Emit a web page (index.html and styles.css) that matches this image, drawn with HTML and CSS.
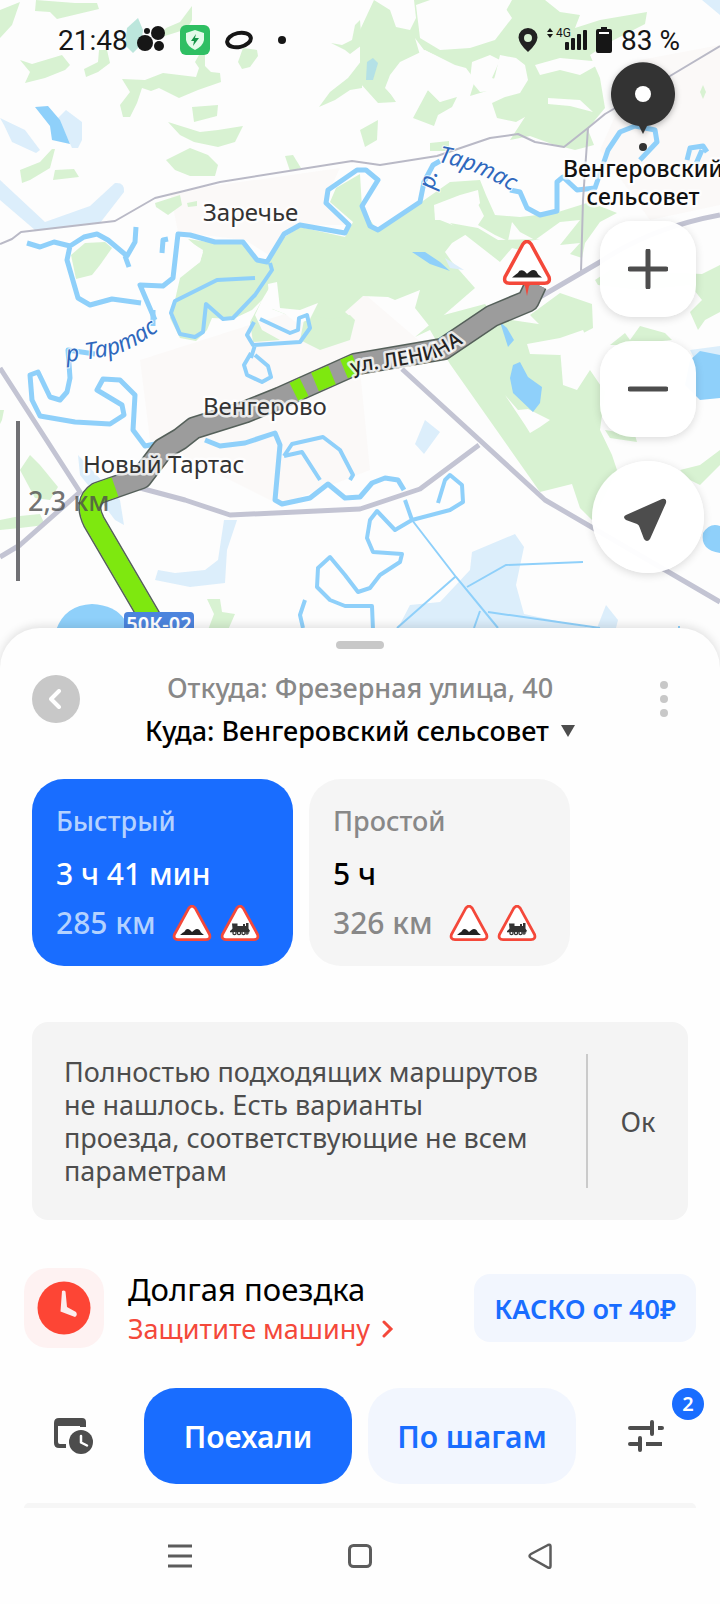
FILE: index.html
```html
<!DOCTYPE html>
<html lang="ru">
<head>
    <meta charset="UTF-8">
    <meta name="viewport" content="width=device-width, initial-scale=1.0">
    <title>Маршрут: Венгеровский сельсовет</title>
    <link rel="stylesheet" href="styles.css">
</head>
<body>
    <!-- Shared road sign icons -->
    <svg class="sprite" aria-hidden="true">
        <symbol id="sign-bump" viewBox="0 0 40 36">
            <path d="M16.8 3.2Q20 -1 23.2 3.2L37.6 29.6Q39 34.5 34 34.6H6Q1 34.5 2.4 29.6Z" fill="#fff" stroke="#f4483a" stroke-width="2.8"/>
            <path d="M8 30L11 27.5Q12.5 27 14 24.5Q16 23.5 18 25L20 27L22.5 25Q25 23 27.5 25L29 27.5L32 30Z" fill="#222"/>
        </symbol>
        <symbol id="sign-train" viewBox="0 0 40 36">
            <path d="M16.8 3.2Q20 -1 23.2 3.2L37.6 29.6Q39 34.5 34 34.6H6Q1 34.5 2.4 29.6Z" fill="#fff" stroke="#f4483a" stroke-width="2.8"/>
            <path d="M12 18.5H17.5V21H23V19H25V21H26V18H28.5V23.5L30 26H10.5L12.5 23.5Z" fill="#333"/>
            <path d="M10 26.5H29.5" stroke="#333" stroke-width="1.6"/>
            <g fill="#fff" stroke="#333" stroke-width="1.3"><circle cx="14.5" cy="28" r="1.6"/><circle cx="19" cy="28" r="1.6"/><circle cx="23.5" cy="28" r="1.6"/><circle cx="27" cy="28" r="1.1"/></g>
        </symbol>
    </svg>

    <div class="map">
        <svg class="map-canvas" viewBox="0 0 720 668" preserveAspectRatio="xMidYMin slice">
            <defs>
                <path id="river-left" d="M67 362Q85 360 108 356Q140 350 180 312"/>
                <path id="river-right" d="M438 162Q475 168 525 199"/>
                <path id="river-right-p" d="M434 190L440 160"/>
                <path id="lenina" d="M353 374L362 371Q420 364 442 356L490 327"/>
            </defs>
            <!-- Settlements -->
            <g class="town">
                <path d="M170 192L340 168L325 200L345 225L300 225L280 262L245 240L178 232Z"/>
                <path d="M640 60L720 45V205L650 220L600 150Z"/>
                <path d="M140 360L360 290L430 350L360 370L370 470L280 505L150 440Z"/>
            </g>
            <!-- Forest -->
            <g class="forest">
                <path d="M0 10L20 2L12 25L0 38Z"/>
                <path d="M36 0L75 3L97 3L99 9L78 14L57 19L50 12L35 11Z"/>
                <path d="M192 6V20L187 29L168 35L158 38L166 28L180 22Z"/>
                <path d="M20 60L32 64L62 55L70 65L65 70L45 78L25 83L30 72Z"/>
                <path d="M99 50H107L110 63L98 72L86 77L84 69L98 62Z"/>
                <path d="M122 79L145 80L163 73L196 77L199 68L195 62L199 55H205V66L211 72L220 73L221 82L198 90L179 98L159 88L151 91L142 88L137 103L130 117H123L120 105L130 92Z"/>
                <path d="M243 48L257 50L258 56L250 67L242 69L238 62Z"/>
                <path d="M192 107L218 105L217 116L194 122Z"/>
                <path d="M168 122L200 132L218 130L243 126L235 142L218 147L194 142L180 135Z"/>
                <path d="M166 160L190 148L208 155L218 165L215 176H190L175 170Z"/>
                <path d="M20 170L40 162L52 149H55L50 168L30 180L22 183Z"/>
                <path d="M55 170L74 169L79 177L53 180Z"/>
                <path d="M285 156L293 155L301 168L290 171Z"/>
                <path d="M360 20L355 25L352 40L342 45L331 43L345 50L350 54L362 45Z"/>
                <path d="M362 60L348 78L330 92L319 107L335 100L350 90L362 88Z"/>
                <path d="M155 203L180 195L182 205L168 215L156 207Z"/>
                <path d="M187 203L197 201V206L188 207Z"/>
                <path d="M71 255L85 243L105 242L112 248L100 265L92 275L76 279Z"/>
                <!-- north wood -->
                <path d="M374 0L390 10L396 27L410 30L416 18L414 0H490L502 18L512 0H545L560 12L580 15L575 28L600 20L647 12L645 24L610 42L590 55L600 78L605 108L595 120L588 130L594 145L575 150L552 144L530 136L510 140L525 117L516 122L497 118L492 103L505 97L520 93L528 80L525 65L516 58L500 55L495 76L490 90L470 96L475 80L466 68L455 65L435 55L424 50L415 38L420 55L405 78L388 90L396 102L378 103L360 83V30Z"/>
                <path d="M428 90L440 102L457 97L452 107L438 115L434 126L413 118Z"/>
                <path d="M360 130L378 120L377 140L365 147Z"/>
                <path d="M430 143L449 141V151H430Z"/>
                <!-- central wood -->
                <path d="M188 239L215 243L242 243L256 262L268 262L283 238L300 227L345 237L353 222L330 202L336 188L360 174L362 208L377 230L420 203L450 182L480 180L486 195L495 215L520 217L555 213L590 202L617 213L600 222L585 243L582 258L570 254L580 243L560 245L580 220L560 222L535 240L520 232L512 222L508 241L495 235L478 225L484 216L478 204L445 205L435 215L440 220L470 232L452 243L445 252L452 262L475 288L430 327L415 308L420 290L395 300L388 297L363 296L345 312L352 318L350 335L335 344L315 325L300 320L272 309L271 285L262 300L255 315L262 330L280 340L253 342L250 322L262 300L252 310L233 319L212 318L207 330L196 341L180 338L170 318L175 300L180 278L200 262L203 252Z"/>
                <path d="M304 320L295 312L330 319L350 315L355 320L350 340L320 350L300 340Z"/>
                <path d="M450 223L478 228L498 240L540 239L525 242L528 252L512 248L500 262Z"/>
                <!-- east woods -->
                <path d="M415 337L440 316L485 304L497 318L545 325L530 345L560 348L563 385L577 390L590 370L605 392L600 430L612 455L617 470L600 505L592 520L580 508L572 484L540 492L450 364L430 330Z"/>
                <path d="M530 315L560 293L592 304L593 328L570 340L530 348L523 344L540 325Z"/>
                <path d="M595 280L610 270L702 274L720 265V312L705 320L698 330L690 312L702 300L690 285L640 290L598 285Z"/>
                <path d="M610 345L625 333L630 340L640 326L665 333L672 340L625 345Z"/>
                <path d="M605 430L635 435L637 442L610 438Z"/>
                <path d="M680 470L700 465L720 450V465L700 485L690 480Z"/>
                <path d="M703 85L706 92L703 99L700 92Z"/>
                <path d="M30 455L40 465L58 487L50 500L35 498L20 470Z"/>
                <path d="M0 520L20 516L40 514L45 525L20 528L0 530Z"/>
                <path d="M0 410H4L2 420L0 424Z"/>
                <path d="M207 599H220L222 612L235 614L228 630H208L214 614Z"/>
            </g>
            <!-- Glades -->
            <g class="glade">
                <path d="M187 240L203 250L200 262L175 280L180 250Z"/>
                <path d="M390 75L400 62L425 50L440 58L455 66L464 80L455 94L440 102L428 90L415 100L398 102L385 88Z"/>
                <path d="M472 62L490 55L500 60L492 78L505 82L500 90L480 92L470 80Z"/>
                <path d="M416 5L430 0H500L512 18L495 40L470 48L440 50L420 38Z"/>
                <path d="M535 65L560 58L603 62L580 75L560 70L540 75Z"/>
                <path d="M548 98L580 100L593 112L570 106L548 104Z"/>
                <path d="M434 205L460 195L478 190L480 203L468 220L435 220Z"/>
                <path d="M268 284L277 282L280 308L300 310L318 303L310 319L298 324L285 314L270 308Z"/>
                <path d="M527 344L560 338L583 330L590 345L560 355L530 354Z"/>
                <path d="M505 395L518 410L528 409L550 420L540 427L530 433L525 425Z"/>
            </g>
            <!-- Marsh and shallow water -->
            <g class="marsh">
                <path d="M0 118L25 130L40 150L36 153L12 142L4 125Z"/>
                <path d="M58 118L66 110L82 122V140L78 148H72Z"/>
                <path d="M0 180L45 222L90 206L115 183Q125 182 124 192L100 223L35 230L0 200Z"/>
                <path d="M78 455L120 500L124 525L115 520L100 500L80 475Z"/>
                <path d="M224 520L237 520L227 550L225 583L190 587L155 580L158 570L175 573L205 570L218 560Z"/>
                <path d="M425 420L440 432L424 454L415 444Z"/>
                <path d="M398 628L410 605L440 602L470 570L472 552L515 534L524 547L516 585L524 614L590 628Z"/>
                <path d="M597 628L606 605L618 620L616 628Z"/>
                <path d="M690 350L720 346V360H695Z"/>
                <path d="M445 258L464 270L450 268Z"/>
                <path d="M702 0H720V15Z"/>
            </g>
            <path class="mint" d="M127 28L138 18L143 30L141 45L133 53L125 45Z"/>
            <!-- Lakes -->
            <g class="lake">
                <path d="M35 107L48 106L60 120L70 144L52 140L50 126Z"/>
                <path d="M412 252L425 252L440 262L450 271L430 264Z"/>
                <path d="M500 322L507 328L514 340L508 347Z"/>
                <path d="M513 365L520 362L528 377L542 387L540 403L533 412L513 393L510 378Z"/>
                <path d="M690 360L700 351L720 355V398L700 400L685 385Z"/>
                <path d="M703 533Q710 522 720 526V553Q700 550 703 533Z"/>
                <path d="M56 630Q65 605 92 604Q115 605 125 620V635Z"/>
                <path d="M367 62L373 58L378 63L373 80L366 80Z" opacity=".5"/>
            </g>
            <!-- Rivers -->
            <g class="river">
                <path d="M27 243L40 247L54 242L70 246L84 237L97 234L108 240L127 256L135 242L136 227M125 256L129 267M70 246L67 260L78 298L90 305L112 299L141 303"/>
                <path d="M162 253L163 240L168 239"/>
                <path d="M155 320L140 285L163 286L173 278L178 234L190 235L215 242H243L257 260L267 262L284 234L300 225L345 233L349 225L326 203L328 190L357 170L366 170L378 180L362 206L370 226L378 230L420 202L424 182L433 165L440 161M510 190L520 192L527 208L540 215L557 211V182L563 177L577 190L595 188L608 150L620 132L635 126L655 130L657 142L640 160"/>
                <path d="M687 160L690 148L703 146L707 152M702 150L695 166"/>
                <path d="M153 310V326M95 354L68 350L70 378L67 392L60 400L50 397L38 372L30 375L32 400L40 416L75 422L110 424L124 415L122 405L97 390L103 379L120 380L135 395L133 430L145 446L175 440L190 420M205 440L220 446L245 443L275 433L280 445L275 500L282 504L310 498L328 484L345 498L360 497L372 483L385 478L398 480L404 490"/>
            </g>
            <g class="river river-thin">
                <path d="M270 263L272 270L255 295L233 318L223 319L206 304L203 332L195 337L180 334L171 313L175 301L217 280L255 278"/>
                <path d="M254 322L247 335L253 345L300 342L310 328L307 315L299 318L298 330L290 333L260 319M255 345L251 358M251 353L244 365L247 375L262 382L271 377L268 366L255 355"/>
                <path d="M284 456L292 444L323 437L340 450L353 475L350 480M284 456L302 452L320 480"/>
                <path d="M405 500L412 520L395 530L377 511L370 520L367 538L373 552L402 554L400 562L380 575L370 588L358 592L345 575L330 557L318 568L317 587L330 600L345 606H372L373 630"/>
                <path d="M412 520L450 510L463 502L462 485L450 475L445 480L438 503"/>
                <path d="M305 600L300 615L303 628"/>
            </g>
            <g class="canal">
                <path d="M412 520L456 577L498 628M455 577L397 628M467 587L506 565L583 562M480 611L474 628M488 612L600 628M679 626V640"/>
            </g>
            <!-- Roads -->
            <g class="road road-thin">
                <path d="M0 244L12 239L21 232L115 221L155 198L180 192L220 182L352 161L380 165L437 156L490 138L518 134L535 142L564 147L588 128L605 114L670 76L720 46"/>
                <path d="M588 128L583 200L581 272"/>
            </g>
            <g class="road">
                <path d="M0 368L80 492L20 545L0 557M140 488L185 500L230 515L360 509L420 489L479 445"/>
                <path d="M402 369L545 500L720 602"/>
                <path d="M540 297L600 262Q650 228 720 215"/>
            </g>
            <!-- Route -->
            <path class="route-edge" d="M156 628L94 522Q84 502 98 493Q115 487 141 478L163 449L180 439L194 428L245 412L280 398L356 364L443 349L492 316L528 301L536 284"/>
            <path class="route-jam" d="M156 628L94 522Q84 502 98 493Q115 487 141 478L163 449L180 439L194 428L245 412L280 398L356 364L443 349L492 316L528 301L536 284"/>
            <path class="route-free" d="M156 628L94 522Q84 502 98 493L115 487M294 392L304 387M315 382L332 375M344 369L356 364"/>
            <!-- Scale ruler -->
            <path class="ruler" d="M18 421V581"/>
            <text class="ruler-text" x="28" y="511">2,3 км</text>
            <!-- Place names -->
            <g class="place">
                <text x="203" y="221">Заречье</text>
                <text x="203" y="415">Венгерово</text>
                <text x="83" y="473">Новый Тартас</text>
            </g>
            <g class="water-name">
                <text><textPath href="#river-left">р Тартас</textPath></text>
                <text><textPath href="#river-right">Тартас</textPath></text>
                <text><textPath href="#river-right-p">р.</textPath></text>
            </g>
            <text class="street"><textPath href="#lenina">ул. ЛЕНИНА</textPath></text>
            <rect x="124" y="612" width="70" height="40" rx="4" fill="#4c84dd"/>
            <text class="road-number" x="159" y="631">50К-02</text>
            <!-- Route warning -->
            <path d="M520 282H534L529 286L527 296L525 286Z" fill="#f4483a"/>
            <svg x="502" y="240" width="50" height="45"><use href="#sign-bump"/></svg>
            <!-- Destination pin -->
            <path class="pin" d="M643 134L639 126A32 32 0 1 1 647 126Z"/>
            <circle cx="643" cy="94" r="8" fill="#fff"/>
            <circle cx="643" cy="147" r="4" fill="#333"/>
            <g class="destination">
                <text x="643" y="177">Венгеровский</text>
                <text x="643" y="205">сельсовет</text>
            </g>
        </svg>

        <div class="status-bar">
            <div class="status-left">
                <span>21:48</span>
                <svg width="28" height="28" viewBox="0 0 28 28" fill="#161616"><circle cx="8" cy="17" r="8"/><circle cx="21" cy="7" r="7"/><circle cx="22" cy="20" r="5"/><circle cx="10" cy="5" r="3"/></svg>
                <svg class="shield" width="30" height="30" viewBox="0 0 30 30"><rect width="30" height="30" rx="6" fill="#2fbf63"/><path d="M15 5L24 8V15Q23 21 15 25Q7 21 6 15V8Z" fill="#e4fbea"/><path d="M16 9L11 16H14L13 21L19 13H15Z" fill="#159447"/></svg>
                <svg class="ring" width="28" height="20" viewBox="0 0 28 20"><ellipse cx="14" cy="10" rx="12" ry="7" transform="rotate(-12 14 10)" fill="none" stroke="#161616" stroke-width="4"/></svg>
                <svg class="dot" width="8" height="8" viewBox="0 0 8 8"><circle cx="4" cy="4" r="4" fill="#161616"/></svg>
            </div>
            <div class="status-right">
                <svg class="location" width="20" height="24" viewBox="0 0 20 24"><path d="M10 0A9.500 9.500 0 0 1 19.500 9.500Q19 16 10 24Q1 16 .5 9.500A9.500 9.500 0 0 1 10 0ZM10 6A4 4 0 1 0 10 14A4 4 0 1 0 10 6Z" fill="#222" fill-rule="evenodd"/></svg>
                <svg width="40" height="24" viewBox="0 0 40 24" fill="#161616"><path d="M0 4L3 0L6 4ZM0 6L3 10L6 6Z"/><text class="network" x="9" y="9">4G</text><rect x="18" y="14" width="4" height="8" rx="1"/><rect x="24" y="10" width="4" height="12" rx="1"/><rect x="30" y="6" width="4" height="16" rx="1"/><rect x="36" y="2" width="4" height="20" rx="1"/></svg>
                <svg class="battery" width="16" height="26" viewBox="0 0 16 26"><path d="M5 0H11V2H14Q16 2 16 4V24Q16 26 14 26H2Q0 26 0 24V4Q0 2 2 2H5Z" fill="#161616"/><path d="M3 6H13" stroke="#fff" stroke-width="2"/></svg>
                <span>83 %</span>
            </div>
        </div>

        <div class="map-controls">
            <button class="zoom-button" aria-label="Приблизить">
                <svg width="40" height="40" viewBox="0 0 40 40"><path d="M20 2V38M2 20H38" stroke="#4d4d4d" stroke-width="5" stroke-linecap="round"/></svg>
            </button>
            <button class="zoom-button" aria-label="Отдалить">
                <svg width="40" height="40" viewBox="0 0 40 40"><path d="M2 20H38" stroke="#4d4d4d" stroke-width="5" stroke-linecap="round"/></svg>
            </button>
            <button class="locate-button" aria-label="Моё местоположение">
                <svg width="48" height="48" viewBox="0 0 48 48"><path d="M38 6L2 22Q-2 24 2 27L13 31Q15 32 15.500 34L20 46Q23 50 26 46L42 10Q43 5 38 6Z" fill="#4d4d4d"/></svg>
            </button>
        </div>
    </div>

    <main class="sheet">
        <div class="handle"></div>

        <header class="route-header">
            <button class="back-button" aria-label="Назад">
                <svg width="14" height="20" viewBox="0 0 14 20"><path d="M10 2L2 10L10 18" fill="none" stroke="#fff" stroke-width="4" stroke-linecap="round" stroke-linejoin="round"/></svg>
            </button>
            <div class="points">
                <button class="point from">Откуда: Фрезерная улица, 40</button>
                <button class="point to">Куда: Венгеровский сельсовет
                    <svg width="14" height="12" viewBox="0 0 14 12"><path d="M0 0H14L7 12Z" fill="#4d4d4d"/></svg>
                </button>
            </div>
            <button class="more-button" aria-label="Ещё">
                <svg width="8" height="36" viewBox="0 0 8 36" fill="#c8c8c8"><circle cx="4" cy="4" r="4"/><circle cx="4" cy="18" r="4"/><circle cx="4" cy="32" r="4"/></svg>
            </button>
        </header>

        <div class="variants">
            <button class="variant active">
                <span class="variant-name">Быстрый</span>
                <span class="variant-time">3 ч 41 мин</span>
                <span class="variant-info">285 км
                    <svg class="sign" width="40" height="36"><use href="#sign-bump"/></svg>
                    <svg class="sign" width="40" height="36"><use href="#sign-train"/></svg>
                </span>
            </button>
            <button class="variant">
                <span class="variant-name">Простой</span>
                <span class="variant-time">5 ч</span>
                <span class="variant-info">326 км
                    <svg class="sign" width="40" height="36"><use href="#sign-bump"/></svg>
                    <svg class="sign" width="40" height="36"><use href="#sign-train"/></svg>
                </span>
            </button>
        </div>

        <div class="notice">
            <p>Полностью подходящих маршрутов не нашлось. Есть варианты проезда, соответствующие не всем параметрам</p>
            <button class="ok-button">Ок</button>
        </div>

        <div class="promo">
            <div class="promo-icon">
                <svg width="54" height="54" viewBox="0 0 54 54"><circle cx="27" cy="27" r="26.500" fill="#fd4535"/><path d="M25 10Q27 9 28.500 10.500L30 26L39 31Q41 34 38 36L23.500 30.500Z" fill="#fceeee"/></svg>
            </div>
            <div class="promo-text">
                <div class="promo-title">Долгая поездка</div>
                <a class="promo-link" href="#">Защитите машину
                    <svg width="12" height="18" viewBox="0 0 12 18"><path d="M2 2L9 9L2 16" fill="none" stroke="#f4483a" stroke-width="3" stroke-linecap="round"/></svg>
                </a>
            </div>
            <button class="promo-button">КАСКО от 40₽</button>
        </div>

        <div class="actions">
            <button class="icon-button" aria-label="Время выезда">
                <svg width="40" height="36" viewBox="0 0 40 36"><path d="M5 0H28Q32 0 32 4V9H26V8H4V24Q4 26 6 26H12V30H5Q0 30 0 25V5Q0 0 5 0Z" fill="#4d4d4d"/><circle cx="27" cy="24" r="14" fill="#fff"/><circle cx="27" cy="24" r="12" fill="#4d4d4d"/><path d="M27 18V24.500L33 27.500" fill="none" stroke="#fff" stroke-width="2.500" stroke-linecap="round" stroke-linejoin="round"/></svg>
            </button>
            <button class="action primary">Поехали</button>
            <button class="action">По шагам</button>
            <button class="icon-button" aria-label="Параметры">
                <svg width="36" height="32" viewBox="0 0 36 32"><path d="M2 8H24M24 2V14M32 8H34M2 24H12M12 18V30" fill="none" stroke="#4d4d4d" stroke-width="4" stroke-linecap="round"/><path d="M30 8H33M18 24H34" stroke="#4d4d4d" stroke-width="4"/></svg>
                <span class="badge">2</span>
            </button>
        </div>
        <div class="next-card"></div>
    </main>

    <nav class="system-nav">
        <button aria-label="Недавние">
            <svg width="24" height="24" viewBox="0 0 24 24"><path d="M0 2H24M0 12H24M0 22H24" stroke="#5c5c5c" stroke-width="3"/></svg>
        </button>
        <button aria-label="Домой">
            <svg width="24" height="24" viewBox="0 0 24 24"><rect x="1.500" y="1.500" width="21" height="21" rx="4" fill="none" stroke="#5c5c5c" stroke-width="3"/></svg>
        </button>
        <button aria-label="Назад">
            <svg width="24" height="26" viewBox="0 0 24 26"><path d="M20 2L3 11Q0 13 3 15L20 24.500Q22.500 25.500 22.500 23V3.500Q22.500 1 20 2Z" fill="none" stroke="#5c5c5c" stroke-width="2.500"/></svg>
        </button>
    </nav>
</body>
</html>
```
FILE: styles.css
```css
* {
    box-sizing: border-box;
}

body {
    margin: 0;
    background: #fefefe;
    color: #000;
    font-family: 'Noto Sans', 'Open Sans', sans-serif;
    font-size: 27px;
}

button {
    margin: 0;
    padding: 0;
    border: none;
    background: none;
    color: inherit;
    font: inherit;
    cursor: pointer;
}

svg {
    display: block;
    flex-shrink: 0;
}

.sprite {
    position: absolute;
    width: 0;
    height: 0;
}

/* Map */
.map {
    position: relative;
    overflow: hidden;
    background: #fdfdfd;
    padding-bottom: 95px;
}

/* Drawing sits under the status bar and the buttons */
.map-canvas {
    position: absolute;
    top: 0;
    left: 0;
    width: 100%;
    height: 100%;
}

.town { fill: #fbf9f8; }
.forest { fill: #d8f2d2; }
.glade { fill: #fdfdfd; }
.marsh { fill: #dceefb; }
.mint { fill: #bce6dc; }
.lake { fill: #8fd0fa; }

.river {
    fill: none;
    stroke: #8fd0fa;
    stroke-width: 5px;
    stroke-linejoin: round;
}

.river-thin {
    stroke-width: 4px;
}

.canal {
    fill: none;
    stroke: #8fd0fa;
    stroke-width: 2px;
}

.road {
    fill: none;
    stroke: #c3c4d3;
    stroke-width: 5px;
    stroke-linejoin: round;
}

.road-thin {
    stroke: #b9b9c6;
    stroke-width: 2px;
}

.route-edge,
.route-jam,
.route-free {
    fill: none;
    stroke-linejoin: round;
}

.route-edge {
    stroke: #55605a;
    stroke-width: 23px;
}

.route-jam {
    stroke: #9c9c9c;
    stroke-width: 20px;
}

.route-free {
    stroke: #7ee80f;
    stroke-width: 20px;
}

.ruler {
    stroke: #707074;
    stroke-width: 4px;
}

.ruler-text {
    font-size: 27px;
    font-weight: 500;
    fill: #4d4d4d;
    fill-opacity: 0.8;
}

.place,
.destination,
.street,
.water-name {
    paint-order: stroke;
    stroke: rgba(255, 255, 255, 0.8);
    stroke-width: 5px;
    stroke-linejoin: round;
}

.place {
    font-size: 24px;
    fill: #333;
}

.destination {
    font-size: 23px;
    font-weight: 500;
    fill: #111;
    text-anchor: middle;
}

.street {
    font-size: 20px;
    font-weight: 500;
    fill: #222;
}

.water-name {
    font-size: 23px;
    font-style: italic;
    fill: #2f68bd;
    stroke-width: 2px;
}

.road-number {
    font-size: 20px;
    font-weight: 600;
    fill: #fff;
    text-anchor: middle;
}

.pin {
    fill: #333;
    filter: drop-shadow(0 2px 3px rgba(0, 0, 0, 0.3));
}

/* Phone status bar */
.status-bar {
    position: relative;
    display: flex;
    justify-content: space-between;
    align-items: center;
    height: 80px;
    padding: 0 40px 0 58px;
    font-family: Roboto, sans-serif;
    font-size: 28px;
    color: #161616;
}

.status-left,
.status-right {
    display: flex;
    align-items: center;
}

.status-left {
    gap: 9px;
}

.status-right {
    gap: 9px;
}

.shield {
    margin-left: 6px;
}

.ring {
    margin-left: 6px;
}

.dot {
    margin-left: 16px;
}

.network {
    font-size: 12px;
}

/* Zoom and location buttons */
.map-controls {
    position: relative;
    display: flex;
    flex-direction: column;
    align-items: flex-end;
    gap: 24px;
    padding: 141px 24px 0;
}

.zoom-button,
.locate-button {
    display: flex;
    justify-content: center;
    align-items: center;
    width: 96px;
    height: 96px;
    border-radius: 32px;
    background: rgba(255, 255, 255, 0.96);
    box-shadow: 0 2px 8px rgba(0, 0, 0, 0.14);
}

.locate-button {
    width: 112px;
    height: 112px;
    margin-right: -8px;
    border-radius: 50%;
}

/* Bottom sheet */
.sheet {
    position: relative;
    margin-top: -40px;
    padding-top: 13px;
    border-radius: 40px 40px 0 0;
    background: #fefefe;
    box-shadow: 0 -2px 10px rgba(0, 0, 0, 0.12);
}

.handle {
    width: 48px;
    height: 8px;
    margin: 0 auto;
    border-radius: 4px;
    background: #c8c8c8;
}

.route-header {
    display: flex;
    justify-content: space-between;
    align-items: center;
    padding: 17px 32px 0;
}

.back-button {
    display: flex;
    justify-content: center;
    align-items: center;
    width: 48px;
    height: 48px;
    margin-bottom: 20px;
    border-radius: 50%;
    background: #c8c8c8;
}

.more-button {
    display: flex;
    justify-content: center;
    width: 48px;
    margin-bottom: 20px;
}

.points {
    display: flex;
    flex-direction: column;
    align-items: center;
}

.point {
    display: flex;
    align-items: center;
    gap: 12px;
    font-weight: 500;
    line-height: 43px;
}

.from {
    color: #888;
}

/* Route variants */
.variants {
    display: flex;
    gap: 16px;
    padding: 27px 32px 0;
}

.variant {
    display: flex;
    flex-direction: column;
    align-items: flex-start;
    width: 261px;
    padding: 24px 24px 21px;
    border-radius: 32px;
    background: #f5f5f5;
    font-weight: 500;
}

.variant-name {
    line-height: 36px;
    color: #888;
}

.variant-time {
    margin-top: 8px;
    font-size: 30px;
    line-height: 54px;
}

.variant-info {
    display: flex;
    align-items: center;
    gap: 8px;
    font-size: 30px;
    line-height: 44px;
    color: #888;
}

.sign:first-of-type {
    margin-left: 8px;
}

.active {
    background: #196dff;
    color: #fff;
}

.active .variant-name,
.active .variant-info {
    color: #b4d2ff;
}

/* Notice */
.notice {
    display: flex;
    margin: 56px 32px 0;
    padding: 32px 0;
    border-radius: 16px;
    background: #f4f4f4;
    color: #4d4d4d;
}

.notice p {
    flex: 1;
    margin: 0;
    padding: 1px 44px 1px 32px;
    line-height: 33px;
}

.ok-button {
    width: 102px;
    border-left: 2px solid #cacaca;
}

/* Insurance promo */
.promo {
    display: flex;
    align-items: center;
    padding: 48px 24px 0;
}

.promo-icon {
    display: flex;
    justify-content: center;
    align-items: center;
    width: 80px;
    height: 80px;
    border-radius: 24px;
    background: #fef2f2;
}

.promo-text {
    flex: 1;
    padding-left: 24px;
}

.promo-title {
    font-size: 31px;
    line-height: 42px;
}

.promo-link {
    display: flex;
    align-items: center;
    gap: 12px;
    line-height: 38px;
    color: #f4483a;
    text-decoration: none;
}

.promo-button {
    height: 68px;
    padding: 0 20px;
    border-radius: 16px;
    background: #f2f6fe;
    color: #196dff;
    font-weight: 600;
}

/* Bottom actions */
.actions {
    display: flex;
    gap: 16px;
    padding: 40px 20px 0;
}

.icon-button {
    position: relative;
    display: flex;
    justify-content: center;
    align-items: center;
    width: 108px;
}

.action {
    flex: 1;
    height: 96px;
    border-radius: 32px;
    background: #f2f6fe;
    color: #196dff;
    font-size: 30px;
    font-weight: 600;
}

.primary {
    background: #196dff;
    color: #fff;
}

.badge {
    position: absolute;
    top: 0;
    right: -4px;
    width: 32px;
    height: 32px;
    border-radius: 50%;
    background: #196dff;
    color: #fff;
    font-size: 20px;
    font-weight: 600;
    line-height: 32px;
    text-align: center;
}

/* Top edge of the card that continues below */
.next-card {
    height: 5px;
    margin: 19px 24px 0;
    border-radius: 24px 24px 0 0;
    background: #f6f6f6;
}

/* Phone navigation */
.system-nav {
    position: relative;
    display: flex;
    justify-content: space-between;
    align-items: center;
    height: 96px;
    padding: 0 168px;
    background: #fefefe;
}
```
